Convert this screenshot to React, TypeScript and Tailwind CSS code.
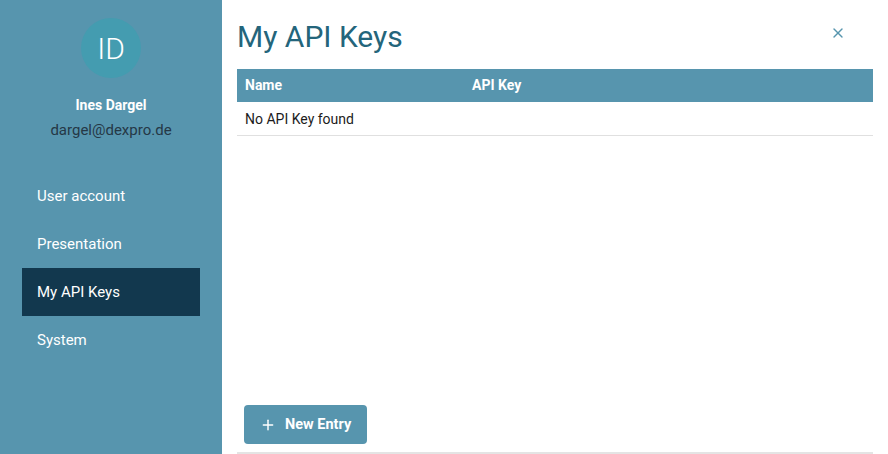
import { Plus, X } from "lucide-react";

const navItems = ["User account", "Presentation", "My API Keys", "System"];

export default function App() {
  const active = "My API Keys";

  return (
    <div className="flex h-screen w-full bg-white font-['Roboto',sans-serif] text-[14px]">
      <aside className="flex w-[222px] shrink-0 flex-col bg-[#5795ae]">
        <div className="flex flex-col items-center pt-[18px]">
          <div className="flex h-[60px] w-[60px] items-center justify-center rounded-full bg-[#449cb0] text-[30px] font-light text-white">
            ID
          </div>
          <div className="mt-[17px] text-[14px] font-bold leading-5 text-white">Ines Dargel</div>
          <div className="mt-[5px] text-[15px] leading-5 text-[#253846]">dargel@dexpro.de</div>
        </div>
        <nav className="mt-[32px] flex flex-col px-[22px]">
          {navItems.map((item) => (
            <div
              key={item}
              className={`flex h-12 items-center px-[15px] text-[15px] text-white ${
                item === active ? "bg-[#12384e]" : ""
              }`}
            >
              {item}
            </div>
          ))}
        </nav>
      </aside>

      <main className="flex min-w-0 flex-1 flex-col px-[15px]">
        <div className="flex items-start justify-between pt-[19px]">
          <h1 className="text-[30px] leading-9 text-[#24657b]">My API Keys</h1>
          <button className="mr-[27px] mt-[6px] text-[#5795ae]">
            <X className="h-[16px] w-[16px]" strokeWidth={2} />
          </button>
        </div>

        <table className="mt-[14px] w-full border-collapse text-left">
          <thead>
            <tr className="h-[33px] bg-[#5795ae] text-white">
              <th className="w-[227px] px-2 font-bold">Name</th>
              <th className="px-2 font-bold">API Key</th>
            </tr>
          </thead>
          <tbody>
            <tr className="h-[33px] border-b border-[#e0e0e0] text-[#1c1c1c]">
              <td className="px-2 pt-[2px]" colSpan={2}>
                No API Key found
              </td>
            </tr>
          </tbody>
        </table>

        <div className="flex-1" />

        <div className="border-b-2 border-[#e4e4e4] pb-[8px] pl-[7px]">
          <button className="flex h-[39px] w-[123px] items-center gap-[9px] rounded-[4px] bg-[#5795ae] pl-[16px] text-[14.5px] font-bold text-white">
            <Plus className="h-[16px] w-[16px]" strokeWidth={2.2} />
            New Entry
          </button>
        </div>
      </main>
    </div>
  );
}
